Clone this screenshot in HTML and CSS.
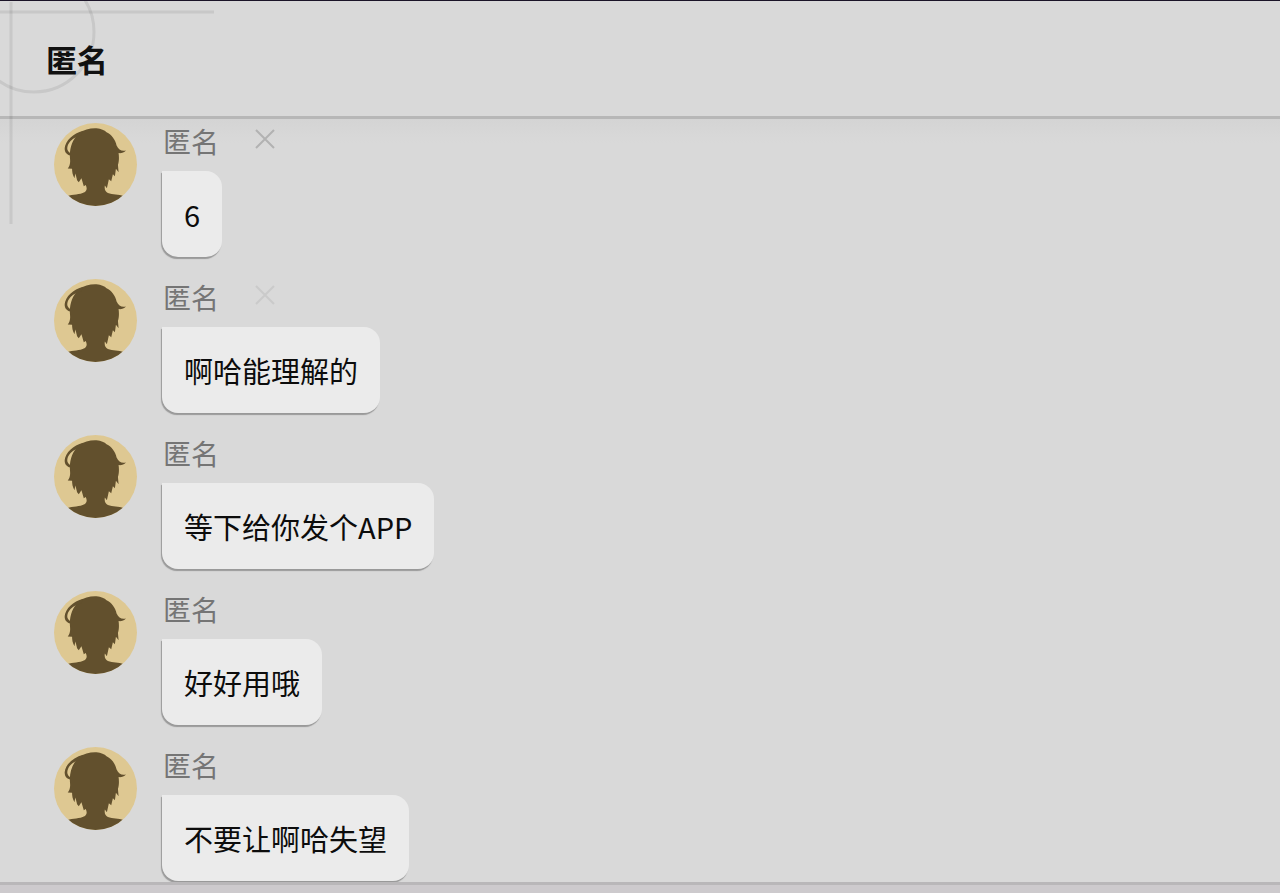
FILE: index.html
```
<!DOCTYPE html>
<html lang="zh-CN">
<head>
    <meta charset="UTF-8">
    <meta name="viewport" content="width=device-width, initial-scale=1.0">
    <title>匿名</title>
    <link rel="stylesheet" href="styles.css">
</head>
<body>
    <!-- Shared shapes -->
    <svg class="defs" aria-hidden="true">
        <symbol id="avatar" viewBox="13 13 248 248">
            <circle cx="137" cy="137" r="124" fill="#dec892"/>
            <g clip-path="url(#avatarClip)" fill="#62502d">
                <path d="M61 122 C58 92 66 62 88 44 C102 33 122 28 140 29 C154 30 164 35 170 41 C186 48 196 64 200 80 C206 93 215 98 228 95 C222 102 214 104 206 103 C208 117 207 130 204 138 L206 160 L198 150 L195 172 L189 166 L184 187 L177 181 L171 208 L165 200 C163 209 166 218 174 222 C188 228 206 225 222 232 L222 266 L52 266 L52 232 C70 225 90 228 104 220 C112 215 112 208 108 198 L102 202 L95 178 L87 190 L82 184 L77 164 L74 178 C68 168 67 158 67 150 L54 149 C60 141 62 133 61 122 Z"/>
                <path d="M100 36 C70 44 47 66 45 88 C44 99 50 107 60 110 L63 104 C52 98 50 88 56 76 C62 64 76 54 95 50 Z"/>
            </g>
        </symbol>
        <clipPath id="avatarClip">
            <circle cx="137" cy="137" r="124"/>
        </clipPath>
        <symbol id="cross" viewBox="0 0 20 20">
            <path d="M1 1 L19 19 M19 1 L1 19" fill="none" stroke="currentColor" stroke-width="2"/>
        </symbol>
    </svg>

    <!-- Corner line art -->
    <svg class="corner" viewBox="0 0 220 230" aria-hidden="true">
        <g fill="none" stroke="#000" stroke-opacity="0.08" stroke-width="3">
            <path d="M0 12 H214"/>
            <path d="M11 2 V224"/>
            <circle cx="34" cy="32" r="60"/>
        </g>
    </svg>

    <header class="header">
        <h1>匿名</h1>
    </header>

    <main class="messages">
        <article class="message">
            <svg class="avatar" aria-hidden="true"><use href="#avatar"/></svg>
            <div class="content">
                <div class="meta">
                    <span class="name">匿名</span>
                    <button class="remove" type="button" aria-label="删除"><svg><use href="#cross"/></svg></button>
                </div>
                <p class="bubble">6</p>
            </div>
        </article>
        <article class="message">
            <svg class="avatar" aria-hidden="true"><use href="#avatar"/></svg>
            <div class="content">
                <div class="meta">
                    <span class="name">匿名</span>
                    <button class="remove faded" type="button" aria-label="删除"><svg><use href="#cross"/></svg></button>
                </div>
                <p class="bubble">啊哈能理解的</p>
            </div>
        </article>
        <article class="message">
            <svg class="avatar" aria-hidden="true"><use href="#avatar"/></svg>
            <div class="content">
                <div class="meta"><span class="name">匿名</span></div>
                <p class="bubble">等下给你发个APP</p>
            </div>
        </article>
        <article class="message">
            <svg class="avatar" aria-hidden="true"><use href="#avatar"/></svg>
            <div class="content">
                <div class="meta"><span class="name">匿名</span></div>
                <p class="bubble">好好用哦</p>
            </div>
        </article>
        <article class="message">
            <svg class="avatar" aria-hidden="true"><use href="#avatar"/></svg>
            <div class="content">
                <div class="meta"><span class="name">匿名</span></div>
                <p class="bubble">不要让啊哈失望</p>
            </div>
        </article>
    </main>

    <footer class="footer"></footer>
</body>
</html>
```
FILE: styles.css
```
* {
    box-sizing: border-box;
}
body {
    margin: 0;
    height: 100vh;
    display: flex;
    flex-direction: column;
    position: relative;
    background: #d9d9d9;
    border-top: 1px solid #1b1428;
    color: #0c0c0c;
    font-family: "Noto Sans CJK SC", "Noto Sans", sans-serif;
}
.defs {
    position: absolute;
    width: 0;
    height: 0;
}
.corner {
    position: absolute;
    top: -1px;
    left: 0;
    width: 220px;
    height: 230px;
    pointer-events: none;
}
.header {
    flex: none;
    padding: 34px 46px 33px;
    border-bottom: 3px solid #b7b7b7;
}
.header h1 {
    margin: 0;
    font-size: 31px;
    line-height: 48px;
    font-weight: 700;
    color: #111;
}
.messages {
    flex: 1;
    min-height: 0;
    overflow: hidden;
    display: flex;
    flex-direction: column;
    gap: 22px;
    padding: 4px 54px 0;
    background: linear-gradient(#d4d4d4, rgba(217, 217, 217, 0) 24px);
}
.message {
    flex: none;
    display: flex;
    align-items: flex-start;
    gap: 25px;
}
.avatar {
    flex: none;
    width: 83px;
    height: 83px;
}
.content {
    display: flex;
    flex-direction: column;
    align-items: flex-start;
}
.meta {
    display: flex;
    gap: 36px;
    height: 48px;
    padding-left: 1px;
}
.name {
    font-size: 28px;
    line-height: 36px;
    color: #757575;
}
.remove {
    width: 20px;
    height: 20px;
    margin-top: 6px;
    padding: 0;
    border: none;
    background: none;
    color: #b2b2b2;
    cursor: pointer;
}
.remove svg {
    display: block;
    width: 20px;
    height: 20px;
}
.remove.faded {
    color: #cacaca;
}
.bubble {
    margin: 0;
    padding: 22px;
    font-size: 29px;
    line-height: 42px;
    background: #ebebeb;
    border-radius: 0 16px 16px 16px;
    box-shadow: -1px 2px 1px #999;
}
.footer {
    flex: none;
    height: 11px;
    background: #cdcacd;
    border-top: 3px solid #b9b7b9;
}
```
